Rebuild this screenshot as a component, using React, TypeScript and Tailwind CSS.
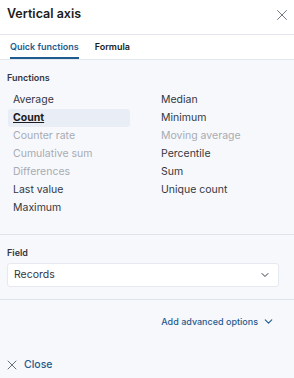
import { X, ChevronDown } from "lucide-react"

const left = [
  { name: "Average" },
  { name: "Count", selected: true },
  { name: "Counter rate", disabled: true },
  { name: "Cumulative sum", disabled: true },
  { name: "Differences", disabled: true },
  { name: "Last value" },
  { name: "Maximum" },
]

const right = [
  { name: "Median" },
  { name: "Minimum" },
  { name: "Moving average", disabled: true },
  { name: "Percentile" },
  { name: "Sum" },
  { name: "Unique count" },
]

type Item = { name: string; selected?: boolean; disabled?: boolean }

const FnItem = ({ item }: { item: Item }) => (
  <div
    className={
      "h-[18px] flex items-center px-[5px] rounded-[3px] text-[10.5px] " +
      (item.selected
        ? "bg-[#e9edf5] font-bold underline text-[#1a1c21]"
        : item.disabled
          ? "text-[#a7abb3]"
          : "text-[#343741]")
    }
  >
    {item.name}
  </div>
)

export default function App() {
  return (
    <div className="w-[294px] h-[378px] bg-[#f7f8fc] flex flex-col font-['Inter',sans-serif] overflow-hidden">
      {/* Header */}
      <div className="bg-white h-[35px] flex items-center justify-between pl-[7px] pr-[3px] border-b border-[#e3e6ec]">
        <span className="text-[12.5px] font-semibold text-[#1a1c21] -mt-[5px]">Vertical axis</span>
        <X className="w-[18px] h-[18px] text-[#69707d] -mt-[5px]" strokeWidth={1.25} />
      </div>

      {/* Tabs */}
      <div className="bg-white h-[25px] flex items-end gap-[16px] pl-[10px] border-b border-[#e3e6ec]">
        <div className="h-full flex items-center pt-[2px] text-[9px] font-semibold text-[#1f5b8f] border-b-2 border-[#1f5b8f]">
          Quick functions
        </div>
        <div className="h-full flex items-center text-[9px] font-semibold text-[#1a1c21]">
          Formula
        </div>
      </div>

      {/* Functions */}
      <div className="px-[7px] pt-[12px] pb-[17px] border-b border-[#dfe3ea]">
        <div className="text-[9px] font-semibold text-[#343741] leading-[12px]">Functions</div>
        <div className="grid grid-cols-[122px_122px] gap-x-[26px] mt-[7px] ml-[1px]">
          <div className="flex flex-col">
            {left.map((item) => (
              <FnItem key={item.name} item={item} />
            ))}
          </div>
          <div className="flex flex-col">
            {right.map((item) => (
              <FnItem key={item.name} item={item} />
            ))}
          </div>
        </div>
      </div>

      {/* Field */}
      <div className="pl-[7px] pr-[15px] pt-[12px] pb-[12px] border-b border-[#dfe3ea]">
        <div className="text-[9px] font-semibold text-[#343741] leading-[12px]">Field</div>
        <div className="mt-[4px] h-[24px] bg-white border border-[#e6e9ef] rounded-[3px] flex items-center justify-between pl-[6px] pr-[7px]">
          <span className="text-[10.5px] text-[#343741]">Records</span>
          <ChevronDown className="w-[12px] h-[12px] text-[#343741]" strokeWidth={2} />
        </div>
      </div>

      {/* Advanced */}
      <div className="flex justify-end pr-[19px] pt-[15px]">
        <div className="flex items-center gap-[4px] text-[9px] font-medium text-[#1f5b8f]">
          Add advanced options
          <ChevronDown className="w-[13px] h-[13px]" strokeWidth={2} />
        </div>
      </div>

      <div className="flex-1" />

      {/* Footer */}
      <div className="h-[30px] flex items-center pl-[4px] gap-[4px] text-[#1f5b8f] mb-[-2px]">
        <X className="w-[16px] h-[16px] text-[#69707d]" strokeWidth={1.5} />
        <span className="text-[10.5px] font-medium">Close</span>
      </div>
    </div>
  )
}
